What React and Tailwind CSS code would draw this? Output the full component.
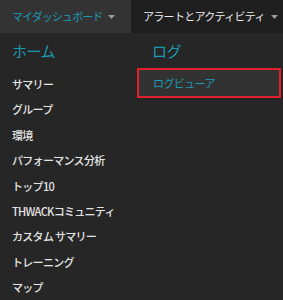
import React from 'react';

const items = [
  'サマリー',
  'グループ',
  '環境',
  'パフォーマンス分析',
  'トップ10',
  'THWACKコミュニティ',
  'カスタム サマリー',
  'トレーニング',
  'マップ',
];

const Caret = ({ className }) => (
  <svg width="7" height="4" viewBox="0 0 7 4" className={className}>
    <path d="M0 0h7L3.5 4z" fill="currentColor" />
  </svg>
);

export default function App() {
  return (
    <div
      className="w-[283px] h-[300px] overflow-hidden bg-[#262626]"
      style={{ fontFamily: '"Noto Sans CJK JP", "Noto Sans", sans-serif' }}
    >
      {/* top nav */}
      <div className="flex h-[33px]">
        <div className="w-[131px] bg-[#333333] flex items-center pl-3 gap-[6px] text-[#1b9bb3] text-[11px] tracking-[-0.9px] whitespace-nowrap">
          <span>マイダッシュボード</span>
          <Caret className="text-[#9a9a9a]" />
        </div>
        <div className="flex-1 bg-[#1f1f1f] flex items-center pl-3 gap-[6px] text-[#eeeeee] text-[11px] tracking-[-0.7px] whitespace-nowrap">
          <span>アラートとアクティビティ</span>
          <Caret className="text-[#9a9a9a]" />
        </div>
      </div>

      {/* dropdown body */}
      <div className="flex">
        <div className="w-[137px] pl-3 pt-[6px]">
          <div className="text-[#1b9bb3] text-[15px] tracking-[-0.5px] h-[24px] leading-[24px] mb-[9px]">ホーム</div>
          <ul>
            {items.map((item) => (
              <li
                key={item}
                className="h-[25.4px] leading-[25.4px] text-[11px] tracking-[-0.7px] font-medium text-[#e4e4e4] whitespace-nowrap"
              >
                {item}
              </li>
            ))}
          </ul>
        </div>
        <div className="flex-1 pt-[6px] pr-[2px]">
          <div className="text-[#1b9bb3] text-[15px] tracking-[-0.5px] h-[24px] leading-[24px] pl-[15px] mb-[5px]">ログ</div>
          <div className="h-[30px] border-2 border-[#e0202a] bg-[#323232] flex items-center pl-[14px] text-[11px] tracking-[-0.6px] text-[#1b9bb3]">
            ログビューア
          </div>
        </div>
      </div>
    </div>
  );
}
